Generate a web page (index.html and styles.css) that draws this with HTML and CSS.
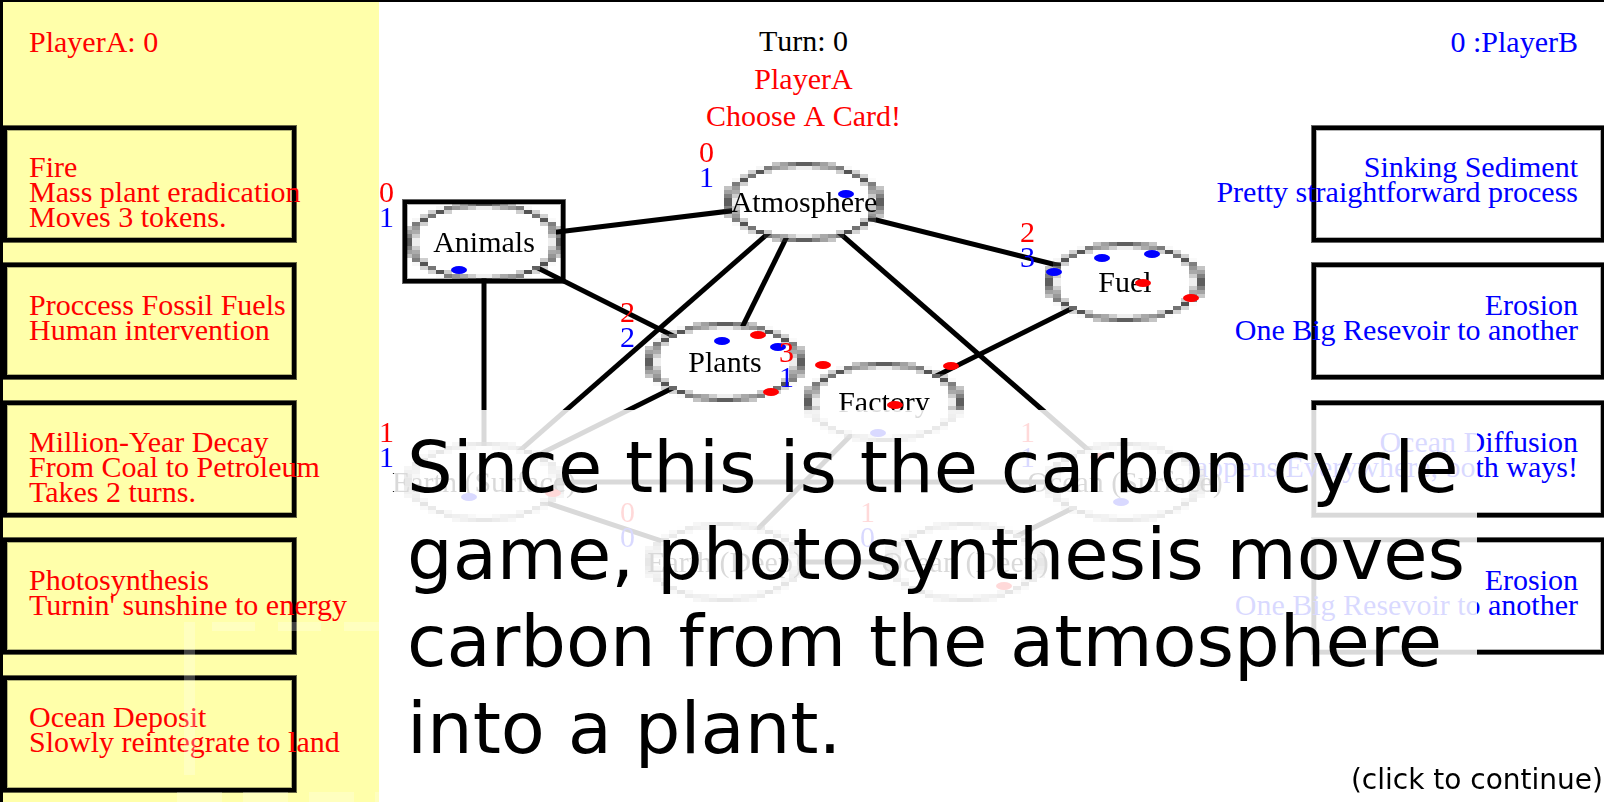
FILE: index.html
```html
<!DOCTYPE html>
<html lang="en">
<head>
    <meta charset="UTF-8">
    <title>Carbon Cycle Game</title>
    <link rel="stylesheet" href="styles.css">
</head>
<body>

<div class="screen">

    <div class="columns">
        <div class="hand hand-a">
            <div class="score">PlayerA: 0</div>
            <div class="card"><span>Fire</span><span>Mass plant eradication</span><span>Moves 3 tokens.</span></div>
            <div class="card"><span>Proccess Fossil Fuels</span><span>Human intervention</span></div>
            <div class="card"><span>Million-Year Decay</span><span>From Coal to Petroleum</span><span>Takes 2 turns.</span></div>
            <div class="card"><span>Photosynthesis</span><span>Turnin' sunshine to energy</span></div>
            <div class="card"><span>Ocean Deposit</span><span>Slowly reintegrate to land</span></div>
        </div>
        <div></div>
        <div class="hand hand-b">
            <div class="score">0 :PlayerB</div>
            <div class="card"><span>Sinking Sediment</span><span>Pretty straightforward process</span></div>
            <div class="card"><span>Erosion</span><span>One Big Resevoir to another</span></div>
            <div class="card"><span>Ocean Diffusion</span><span>Happens Everywhere, both ways!</span></div>
            <div class="card"><span>Erosion</span><span>One Big Resevoir to another</span></div>
        </div>
    </div>

    <div class="status">
        <div>Turn: 0</div>
        <div class="status-red">PlayerA</div>
        <div class="status-red">Choose A Card!</div>
    </div>

    <svg class="links" width="1604" height="802">
        <line x1="484" y1="241" x2="804" y2="202"/>
        <line x1="484" y1="241" x2="725" y2="362"/>
        <line x1="484" y1="241" x2="484" y2="482"/>
        <line x1="804" y1="202" x2="725" y2="362"/>
        <line x1="804" y1="202" x2="484" y2="482"/>
        <line x1="804" y1="202" x2="1125" y2="282"/>
        <line x1="804" y1="202" x2="1125" y2="482"/>
        <line x1="1125" y1="282" x2="884" y2="402"/>
        <line x1="725" y1="362" x2="484" y2="482"/>
        <line x1="484" y1="482" x2="1125" y2="482"/>
        <line x1="484" y1="482" x2="725" y2="562"/>
        <line x1="725" y1="562" x2="965" y2="562"/>
        <line x1="725" y1="562" x2="884" y2="402"/>
        <line x1="965" y1="562" x2="1125" y2="482"/>
    </svg>

    <div class="node node-atmosphere"><canvas class="ring" width="20" height="20"></canvas><span class="label">Atmosphere</span></div>
    <div class="node node-animals selected"><canvas class="ring" width="20" height="20"></canvas><span class="label">Animals</span></div>
    <div class="node node-fuel"><canvas class="ring" width="20" height="20"></canvas><span class="label">Fuel</span></div>
    <div class="node node-plants"><canvas class="ring" width="20" height="20"></canvas><span class="label">Plants</span></div>
    <div class="node node-factory"><canvas class="ring" width="20" height="20"></canvas><span class="label">Factory</span></div>
    <div class="node node-earth-surface"><canvas class="ring" width="20" height="20"></canvas><span class="label">Earth (Surface)</span></div>
    <div class="node node-earth-deep"><canvas class="ring" width="20" height="20"></canvas><span class="label">Earth (Deep)</span></div>
    <div class="node node-ocean-deep"><canvas class="ring" width="20" height="20"></canvas><span class="label">Ocean (Deep)</span></div>
    <div class="node node-ocean-surface"><canvas class="ring" width="20" height="20"></canvas><span class="label">Ocean (Surface)</span></div>

    <svg class="tokens" width="1604" height="802">
        <g class="token-blue">
            <ellipse cx="459" cy="270" rx="8" ry="4"/>
            <ellipse cx="846" cy="194" rx="8" ry="4"/>
            <ellipse cx="1102" cy="258" rx="8" ry="4"/>
            <ellipse cx="1152" cy="254" rx="8" ry="4"/>
            <ellipse cx="1054" cy="272" rx="8" ry="4"/>
            <ellipse cx="722" cy="341" rx="8" ry="4"/>
            <ellipse cx="778" cy="347" rx="8" ry="4"/>
            <ellipse cx="878" cy="433" rx="8" ry="4"/>
            <ellipse cx="469" cy="497" rx="8" ry="4"/>
            <ellipse cx="1121" cy="502" rx="8" ry="4"/>
        </g>
        <g class="token-red">
            <ellipse cx="1143" cy="283" rx="8" ry="4"/>
            <ellipse cx="1191" cy="298" rx="8" ry="4"/>
            <ellipse cx="758" cy="335" rx="8" ry="4"/>
            <ellipse cx="771" cy="392" rx="8" ry="4"/>
            <ellipse cx="823" cy="365" rx="8" ry="4"/>
            <ellipse cx="951" cy="366" rx="8" ry="4"/>
            <ellipse cx="895" cy="405" rx="8" ry="4"/>
            <ellipse cx="553" cy="493" rx="8" ry="4"/>
            <ellipse cx="1004" cy="586" rx="8" ry="4"/>
            <ellipse cx="1098" cy="457" rx="8" ry="4"/>
        </g>
    </svg>

    <div class="count count-atmosphere"><span class="red">0</span><span class="blue">1</span></div>
    <div class="count count-animals"><span class="red">0</span><span class="blue">1</span></div>
    <div class="count count-fuel"><span class="red">2</span><span class="blue">3</span></div>
    <div class="count count-plants"><span class="red">2</span><span class="blue">2</span></div>
    <div class="count count-factory"><span class="red">3</span><span class="blue">1</span></div>
    <div class="count count-earth-surface"><span class="red">1</span><span class="blue">1</span></div>
    <div class="count count-earth-deep"><span class="red">0</span><span class="blue">0</span></div>
    <div class="count count-ocean-deep"><span class="red">1</span><span class="blue">0</span></div>
    <div class="count count-ocean-surface"><span class="red">1</span><span class="blue">1</span></div>

    <!-- faint dashed frame left over from the tutorial highlight -->
    <div class="dash dash-top"></div>
    <div class="dash dash-bottom"></div>
    <div class="dash dash-left"></div>

    <div class="tutorial">Since this is the carbon cycle game, photosynthesis moves carbon from the atmosphere into a plant.</div>
    <div class="continue">(click to continue)</div>

</div>

<script src="script.js"></script>

</body>
</html>
```

FILE: styles.css
```css
body {
    margin: 0;
    overflow: hidden;
    background: white;
    font-family: "Liberation Serif", "Times New Roman", serif;
    font-size: 30px;
    line-height: 25px;
}
.screen {
    position: relative;
    width: 1604px;
    height: 802px;
    overflow: hidden;
}
.columns {
    display: grid;
    grid-template-columns: 376px 1fr 293px;
    box-sizing: border-box;
    width: 1605px;
    height: 802px;
    border-left: 3px solid black;
    border-top: 2px solid black;
}
.hand {
    display: flex;
    flex-direction: column;
    gap: 21.5px;
    white-space: nowrap;
}
.hand-a {
    background: #ffffaa;
    color: red;
}
.hand-b {
    color: blue;
    text-align: right;
}
.score {
    box-sizing: border-box;
    height: 102px;
    padding: 27px 26px 0;
}
.card {
    display: flex;
    flex-direction: column;
    align-items: flex-start;
    box-sizing: border-box;
    flex: none;
    height: 116px;
    padding: 24.5px 22px 0;
    border: 4px solid black;
    box-shadow: 0 0 0 1px rgba(0,0,0,0.6), inset 0 0 0 1px rgba(0,0,0,0.3);
}
.hand-a .card {
    width: 293px;
}
.hand-b .card {
    align-items: flex-end;
    padding-right: 23px;
}
.hand-b .score {
    padding-right: 27px;
}

.status {
    position: absolute;
    top: 22px;
    left: 3px;
    right: 0;
    text-align: center;
    line-height: 37.5px;
    font-kerning: none;
}
.status-red {
    color: red;
}

.links {
    position: absolute;
    top: 0;
    left: 0;
}
.links line {
    stroke: black;
    stroke-width: 5;
}

.node {
    position: absolute;
    width: 160px;
    height: 80px;
    display: flex;
    align-items: center;
    justify-content: center;
    white-space: nowrap;
    line-height: 80px;
}
.ring {
    position: absolute;
    top: 0;
    left: 0;
    width: 160px;
    height: 80px;
    image-rendering: pixelated;
}
.label {
    position: relative;
}
.selected::after {
    content: "";
    position: absolute;
    top: -2px;
    left: -1px;
    right: -1px;
    bottom: -1px;
    border: 4px solid black;
    box-shadow: 0 0 0 1px rgba(0,0,0,0.6), inset 0 0 0 1px rgba(0,0,0,0.3);
}
.node-atmosphere { left: 724px; top: 162px; }
.node-animals { left: 404px; top: 202px; }
.node-fuel { left: 1045px; top: 242px; }
.node-plants { left: 645px; top: 322px; }
.node-factory { left: 804px; top: 362px; }
.node-earth-surface { left: 404px; top: 442px; }
.node-earth-deep { left: 645px; top: 522px; }
.node-ocean-deep { left: 885px; top: 522px; }
.node-ocean-surface { left: 1045px; top: 442px; }

.tokens {
    position: absolute;
    top: 0;
    left: 0;
}
.token-blue {
    fill: blue;
}
.token-red {
    fill: red;
}

.count {
    position: absolute;
}
.count span {
    display: block;
}
.red {
    color: red;
}
.blue {
    color: blue;
}
.count-atmosphere { left: 699px; top: 139px; }
.count-animals { left: 379px; top: 179px; }
.count-fuel { left: 1020px; top: 219px; }
.count-plants { left: 620px; top: 299px; }
.count-factory { left: 779px; top: 339px; }
.count-earth-surface { left: 379px; top: 419px; }
.count-earth-deep { left: 620px; top: 499px; }
.count-ocean-deep { left: 860px; top: 499px; }
.count-ocean-surface { left: 1020px; top: 419px; }

.dash {
    position: absolute;
}
.dash-top {
    top: 622px;
    left: 212px;
    width: 167px;
    height: 9px;
    background: repeating-linear-gradient(to right, rgba(255,255,255,0.25) 0 43px, transparent 43px 66px);
}
.dash-bottom {
    top: 792px;
    left: 177px;
    width: 202px;
    height: 10px;
    background: repeating-linear-gradient(to right, rgba(255,255,255,0.25) 0 45px, transparent 45px 66px);
}
.dash-left {
    top: 622px;
    left: 184px;
    width: 11px;
    height: 153px;
    background: rgba(255,255,255,0.25);
}

.tutorial {
    position: absolute;
    top: 410px;
    left: 394px;
    right: 127px;
    bottom: 0;
    box-sizing: border-box;
    padding: 14px 0 0 13px;
    background: rgba(255,255,255,0.85);
    color: black;
    font-family: "DejaVu Sans", Verdana, sans-serif;
    font-size: 72px;
    line-height: 87px;
}
.continue {
    position: absolute;
    right: 1px;
    bottom: 6px;
    font-family: "DejaVu Sans", Verdana, sans-serif;
    font-size: 28px;
    line-height: 32px;
}
```

FILE: script.js
```js
// the nodes are 20x20 bitmaps stretched to 160x80
document.querySelectorAll('.ring').forEach(ring => {
    const ctx = ring.getContext('2d');
    ctx.beginPath();
    ctx.arc(10, 10, 9.5, 0, Math.PI * 2);
    ctx.fillStyle = 'white';
    ctx.fill();
    ctx.strokeStyle = 'black';
    ctx.lineWidth = 0.7;
    ctx.stroke();
});
```
